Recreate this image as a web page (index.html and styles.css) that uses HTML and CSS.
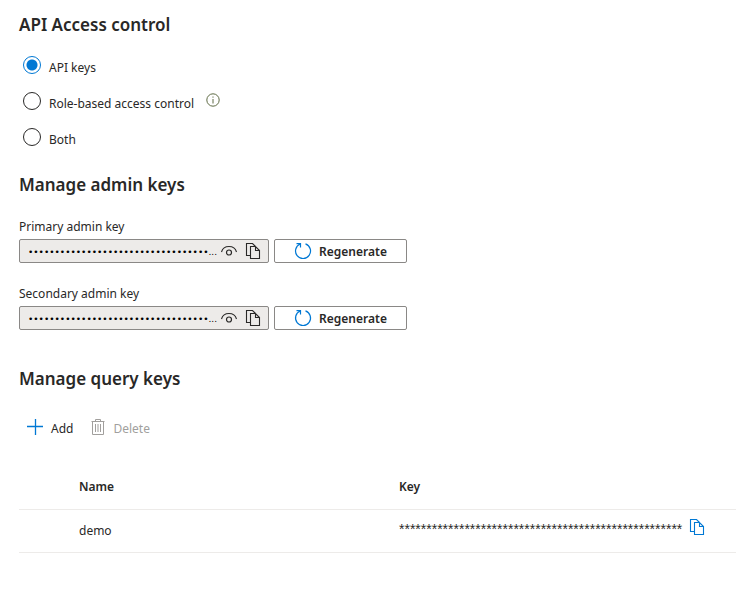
FILE: index.html
```html
<!DOCTYPE html>
<html lang="en">
<head>
<meta charset="utf-8">
<title>Keys</title>
<link rel="stylesheet" href="styles.css">
</head>
<body>
<svg class="defs" width="0" height="0" aria-hidden="true">
  <symbol id="copy" viewBox="0 0 16 18"><path d="M5 13.500H1.500V1.500H7.500L10.500 4.500M5.500 4.500H10.500L14.500 8.500V16.500H5.500ZM10.500 4.500V8.500H14.500" fill="none" stroke="currentColor" stroke-width="1.100"/></symbol>
  <symbol id="eye" viewBox="0 0 18 14"><path d="M1.500 8C2.500 4.500 5.500 2.500 9 2.500S15.500 4.500 16.500 8" fill="none" stroke="currentColor" stroke-width="1.100"/><circle cx="9" cy="8.500" r="2.500" fill="none" stroke="currentColor" stroke-width="1.200"/></symbol>
  <symbol id="refresh" viewBox="0 0 18 18"><path d="M11.500 1.900A7.500 7.500 0 1 1 6.300 2M2.500 1.600H6.500V5.500" fill="none" stroke="currentColor" stroke-width="1.200"/></symbol>
</svg>
<main class="page">
  <section>
    <h2>API Access control</h2>
    <div class="choices">
      <div class="choice"><input type="radio" name="access" id="keys" checked><label for="keys">API keys</label></div>
      <div class="choice"><input type="radio" name="access" id="rbac"><label for="rbac">Role-based access control</label>
        <svg class="info" width="14" height="14" viewBox="0 0 14 14" aria-hidden="true"><circle cx="7" cy="7" r="6.200" fill="none" stroke="currentColor"/><path d="M7 6V10.500M7 3.500V4.700" stroke="currentColor"/></svg></div>
      <div class="choice"><input type="radio" name="access" id="both"><label for="both">Both</label></div>
    </div>
  </section>

  <section>
    <h2>Manage admin keys</h2>
    <div class="field">
      <label for="primary">Primary admin key</label>
      <div class="row">
        <div class="secret">
          <input type="text" id="primary" readonly value="••••••••••••••••••••••••••••••••••...">
          <button class="icon" aria-label="Show"><svg width="18" height="14"><use href="#eye"/></svg></button>
          <button class="icon" aria-label="Copy"><svg width="16" height="18"><use href="#copy"/></svg></button>
        </div>
        <button class="regenerate"><svg width="18" height="18"><use href="#refresh"/></svg><span>Regenerate</span></button>
      </div>
    </div>
    <div class="field">
      <label for="secondary">Secondary admin key</label>
      <div class="row">
        <div class="secret">
          <input type="text" id="secondary" readonly value="••••••••••••••••••••••••••••••••••...">
          <button class="icon" aria-label="Show"><svg width="18" height="14"><use href="#eye"/></svg></button>
          <button class="icon" aria-label="Copy"><svg width="16" height="18"><use href="#copy"/></svg></button>
        </div>
        <button class="regenerate"><svg width="18" height="18"><use href="#refresh"/></svg><span>Regenerate</span></button>
      </div>
    </div>
  </section>

  <section>
    <h2>Manage query keys</h2>
    <div class="toolbar">
      <button class="command"><svg width="16" height="16" viewBox="0 0 16 16"><path d="M0 7.500H16M8.500 0V16" stroke="#0078d4" stroke-width="1.300"/></svg><span>Add</span></button>
      <button class="command" disabled><svg width="14" height="16" viewBox="0 0 14 16"><path d="M0.500 2.500H13.500M4.500 2.500V0.500H9.500V2.500M1.500 2.500V15.500H12.500V2.500M4.500 5V13M7 5V13M9.500 5V13" fill="none" stroke="currentColor"/></svg><span>Delete</span></button>
    </div>
    <table>
      <thead><tr><th class="name">Name</th><th>Key</th></tr></thead>
      <tbody><tr><td class="name">demo</td><td><div class="key"><span class="stars">****************************************************</span><button class="icon blue" aria-label="Copy"><svg width="16" height="18"><use href="#copy"/></svg></button></div></td></tr></tbody>
    </table>
  </section>
</main>
</body>
</html>
```
FILE: styles.css
```css
* { box-sizing: border-box; }
body {
  margin: 0;
  background: #fff;
  color: #292827;
  font: 12px/20px "Noto Sans", "Open Sans", sans-serif;
}
button, input { font: inherit; color: inherit; }
button { border: 0; padding: 0; background: none; }
svg { display: block; flex: none; }
.defs { position: absolute; }
.page { padding: 13px 0 40px 19px; }
h2 { margin: 0; font-size: 17px; line-height: 24px; font-weight: 600; }

.choices { padding: 10px 0 18px 4px; }
.choice { display: flex; align-items: center; height: 36px; }
.choice input {
  appearance: none;
  width: 18px;
  height: 18px;
  margin: 0 8px 0 0;
  border: 1px solid #292827;
  border-radius: 50%;
}
.choice input:checked {
  border-color: #0078d4;
  background: radial-gradient(circle, #0078d4 5px, transparent 6px);
}
.choice label { padding-top: 6px; }
.info { margin: 0 0 2px 12px; color: #5f6b45; }

.field { padding-top: 20px; }
.field + .field { padding-top: 21px; }
.field > label { display: block; height: 22px; line-height: 20px; }
.row { display: flex; gap: 5px; }
.secret {
  display: flex;
  align-items: center;
  gap: 7px;
  width: 250px;
  height: 24px;
  padding: 0 7px 0 8px;
  border: 1px solid #8a8886;
  border-radius: 2px;
  background: #edebe9;
}
.secret input {
  flex: 1;
  min-width: 0;
  height: 22px;
  margin-right: -7px;
  padding: 2px 0 0;
  border: 0;
  background: none;
  color: #000;
  font: 9px/20px "DejaVu Sans", sans-serif;
}
.regenerate {
  display: flex;
  justify-content: center;
  gap: 7px;
  width: 133px;
  height: 24px;
  padding-top: 2px;
  border: 1px solid #8a8886;
  border-radius: 2px;
  font-weight: 600;
}
.regenerate svg, .blue { color: #0078d4; }

section + section + section { padding-top: 37px; }
.toolbar { display: flex; gap: 18px; padding: 28px 8px 0; }
.command { display: flex; gap: 8px; }
.command:disabled { color: #a19f9d; }
table { width: 100%; margin-top: 27px; border-collapse: collapse; text-align: left; }
th, td { padding: 0; height: 43px; border-bottom: 1px solid #edebe9; }
th { font-weight: 600; }
.name { width: 380px; padding-left: 60px; }
.key { display: flex; align-items: center; gap: 7px; padding-bottom: 8px; }
.stars { padding-top: 4px; font: 14px/20px "Liberation Sans", sans-serif; }
```
